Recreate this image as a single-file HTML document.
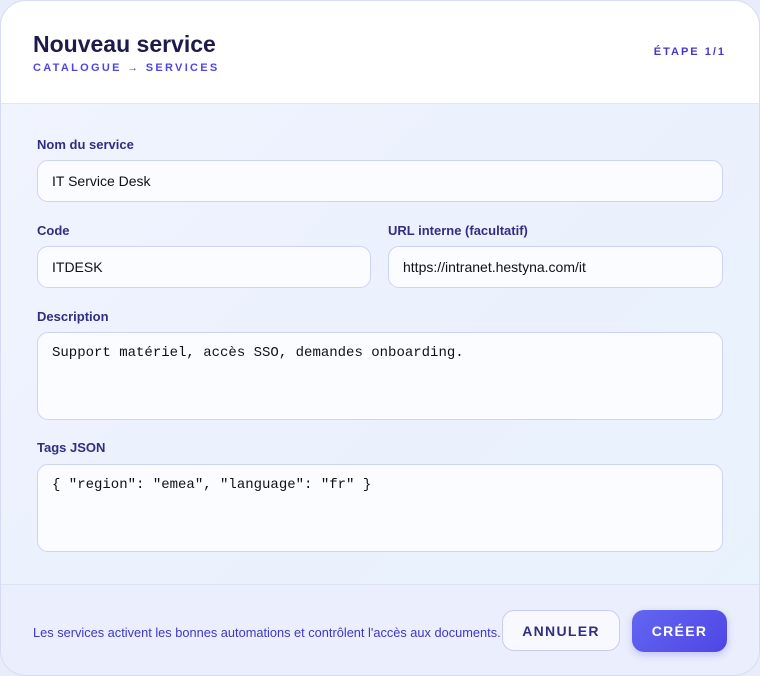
<!DOCTYPE html>
<html><head><meta charset="utf-8"><style>
*{box-sizing:border-box;margin:0;padding:0}
body{width:760px;height:676px;background:#e9ecfb;font-family:"Liberation Sans",sans-serif;overflow:hidden}
.card{position:absolute;left:0;top:0;width:760px;height:676px;border:1px solid #d6daf5;border-radius:26px;overflow:hidden;background:linear-gradient(135deg,#f1f4fe,#eaf1fd 60%,#e8f3fd)}
.head{position:absolute;left:-1px;top:-1px;right:-1px;height:104px;background:#fff;border-bottom:1px solid #e2e6f6}
h1{position:absolute;left:33px;top:31px;font-size:23px;font-weight:bold;color:#1e1b4b;letter-spacing:0}
.sub{position:absolute;left:33px;top:62px;font-size:11px;font-weight:bold;letter-spacing:2.3px;color:#4f46e5}
.step{position:absolute;right:34px;top:46px;font-size:11px;font-weight:bold;letter-spacing:2px;color:#4338ca}
.lbl{position:absolute;font-size:13px;font-weight:bold;color:#312e81}
.in{position:absolute;background:#fbfcff;border:1px solid #cfd2f7;border-radius:11px;font-size:14px;color:#111;padding:0 14px;display:flex;align-items:center}
.ta{align-items:flex-start;padding-top:12px;font-family:"Liberation Mono",monospace;font-size:14px}
.foot{position:absolute;left:-1px;right:-1px;top:583px;bottom:-1px;border-top:1px solid #dde2f5;background:#eaeefd}
.ft{position:absolute;left:33px;top:40px;font-size:12.8px;color:#3f37c9}
.b1{position:absolute;left:502px;top:25px;width:118px;height:41px;border:1px solid #c9ccf6;border-radius:12px;background:#f8f9ff;color:#312e81;font-weight:bold;font-size:14px;letter-spacing:1.3px;display:flex;align-items:center;justify-content:center}
.b2{position:absolute;left:632px;top:25px;width:95px;height:42px;border-radius:12px;background:linear-gradient(135deg,#6366f1,#4f46e5);color:#fff;font-weight:bold;font-size:14px;letter-spacing:1.3px;display:flex;align-items:center;justify-content:center;box-shadow:0 3px 8px rgba(79,70,229,.25)}
</style></head><body>
<div class="card">
<div class="head">
<h1>Nouveau service</h1>
<div class="sub">CATALOGUE → SERVICES</div>
<div class="step">ÉTAPE 1/1</div>
</div>
<div class="lbl" style="left:36px;top:136px">Nom du service</div>
<div class="in" style="left:36px;top:159px;width:686px;height:42px">IT Service Desk</div>
<div class="lbl" style="left:36px;top:222px">Code</div>
<div class="in" style="left:36px;top:245px;width:334px;height:42px">ITDESK</div>
<div class="lbl" style="left:387px;top:222px">URL interne (facultatif)</div>
<div class="in" style="left:387px;top:245px;width:335px;height:42px">https://intranet.hestyna.com/it</div>
<div class="lbl" style="left:36px;top:308px">Description</div>
<div class="in ta" style="left:36px;top:331px;width:686px;height:88px">Support matériel, accès SSO, demandes onboarding.</div>
<div class="lbl" style="left:36px;top:439px">Tags JSON</div>
<div class="in ta" style="left:36px;top:463px;width:686px;height:88px">{ "region": "emea", "language": "fr" }</div>
<div class="foot">
<div class="ft">Les services activent les bonnes automations et contrôlent l'accès aux documents.</div>
<div class="b1">ANNULER</div>
<div class="b2">CRÉER</div>
</div>
</div>
</body></html>
